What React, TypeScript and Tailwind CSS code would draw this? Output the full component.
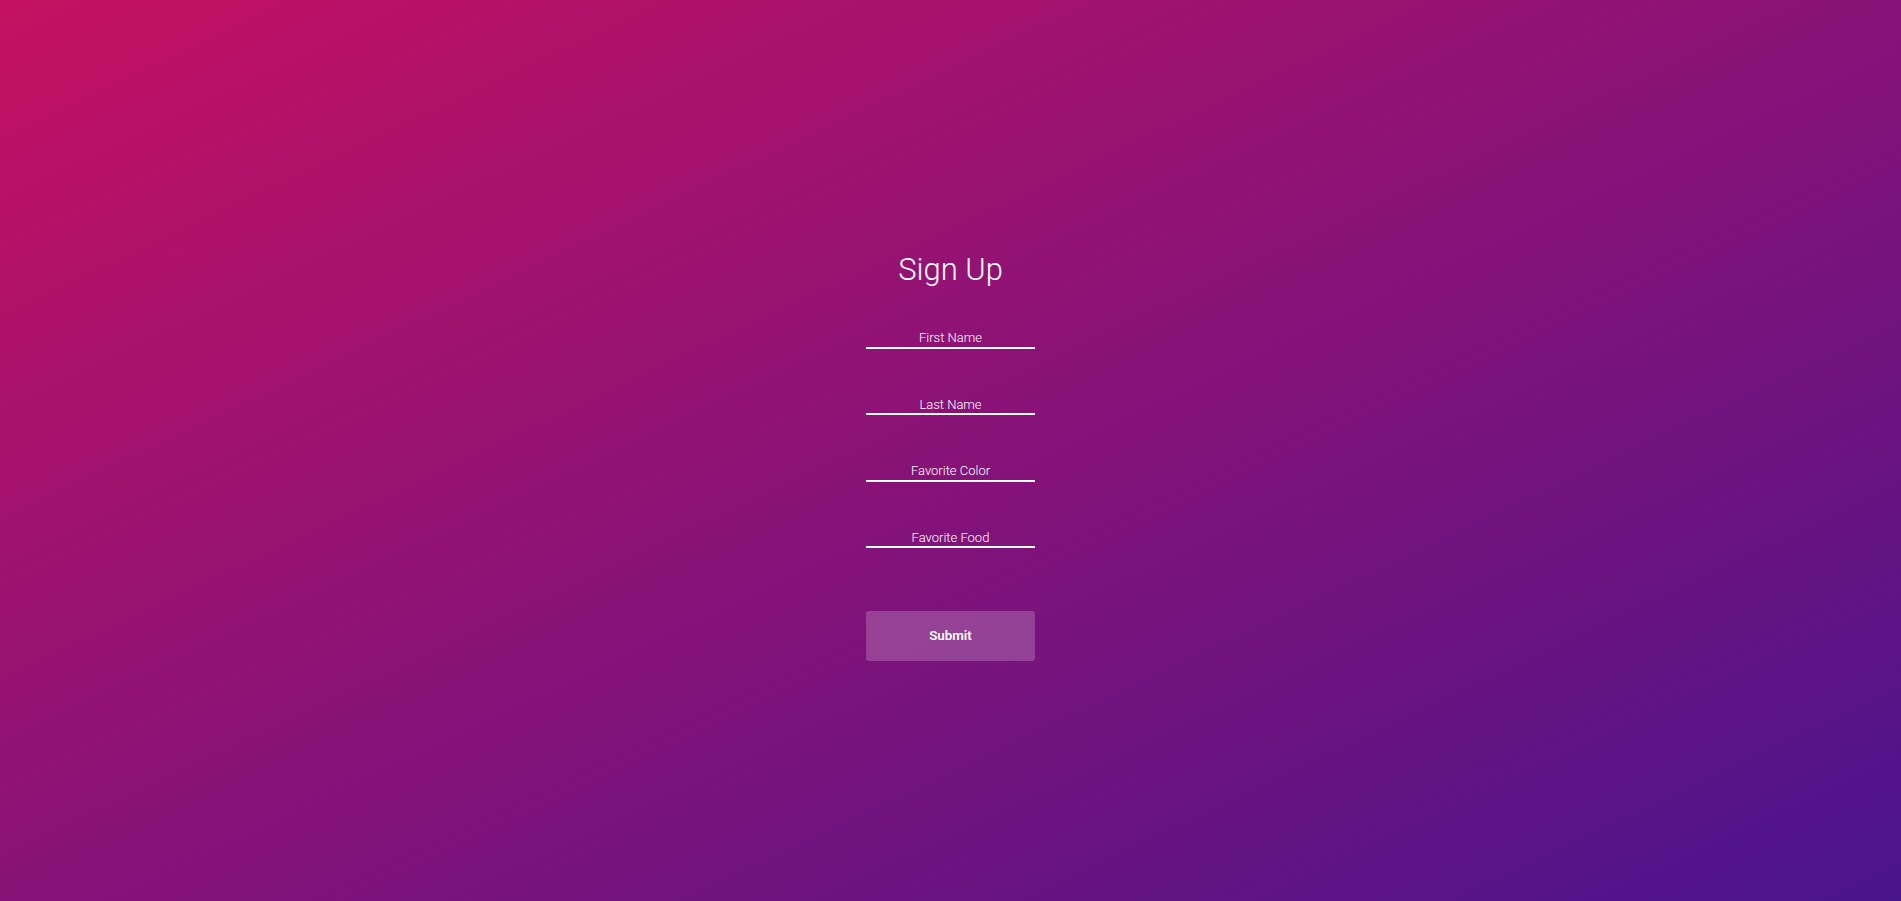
const fields = ["First Name", "Last Name", "Favorite Color", "Favorite Food"];

export default function App() {
  return (
    <div
      className="h-screen w-full flex flex-col items-center justify-center pt-[14px] bg-linear-to-br/srgb from-[#c51162] to-[#4a148c]"
      style={{ fontFamily: "Roboto, 'Liberation Sans', sans-serif" }}
    >
      <h1 className="text-[31px] leading-none font-light text-white">Sign Up</h1>

      <form className="mt-[46px] flex flex-col w-[169px]" onSubmit={(e) => e.preventDefault()}>
        <div className="flex flex-col gap-[48.5px]">
          {fields.map((f) => (
            <input
              key={f}
              type="text"
              placeholder={f}
              className="h-[18px] w-full bg-transparent border-0 border-b-2 border-white text-center text-[13px] font-light text-white placeholder:text-white outline-none px-0 pt-0 pb-[2px]"
            />
          ))}
        </div>

        <button
          type="submit"
          className="mt-[62.5px] h-[50.5px] w-full rounded-[3px] bg-white/20 text-white text-[13.33px] font-semibold"
        >
          Submit
        </button>
      </form>
    </div>
  );
}
